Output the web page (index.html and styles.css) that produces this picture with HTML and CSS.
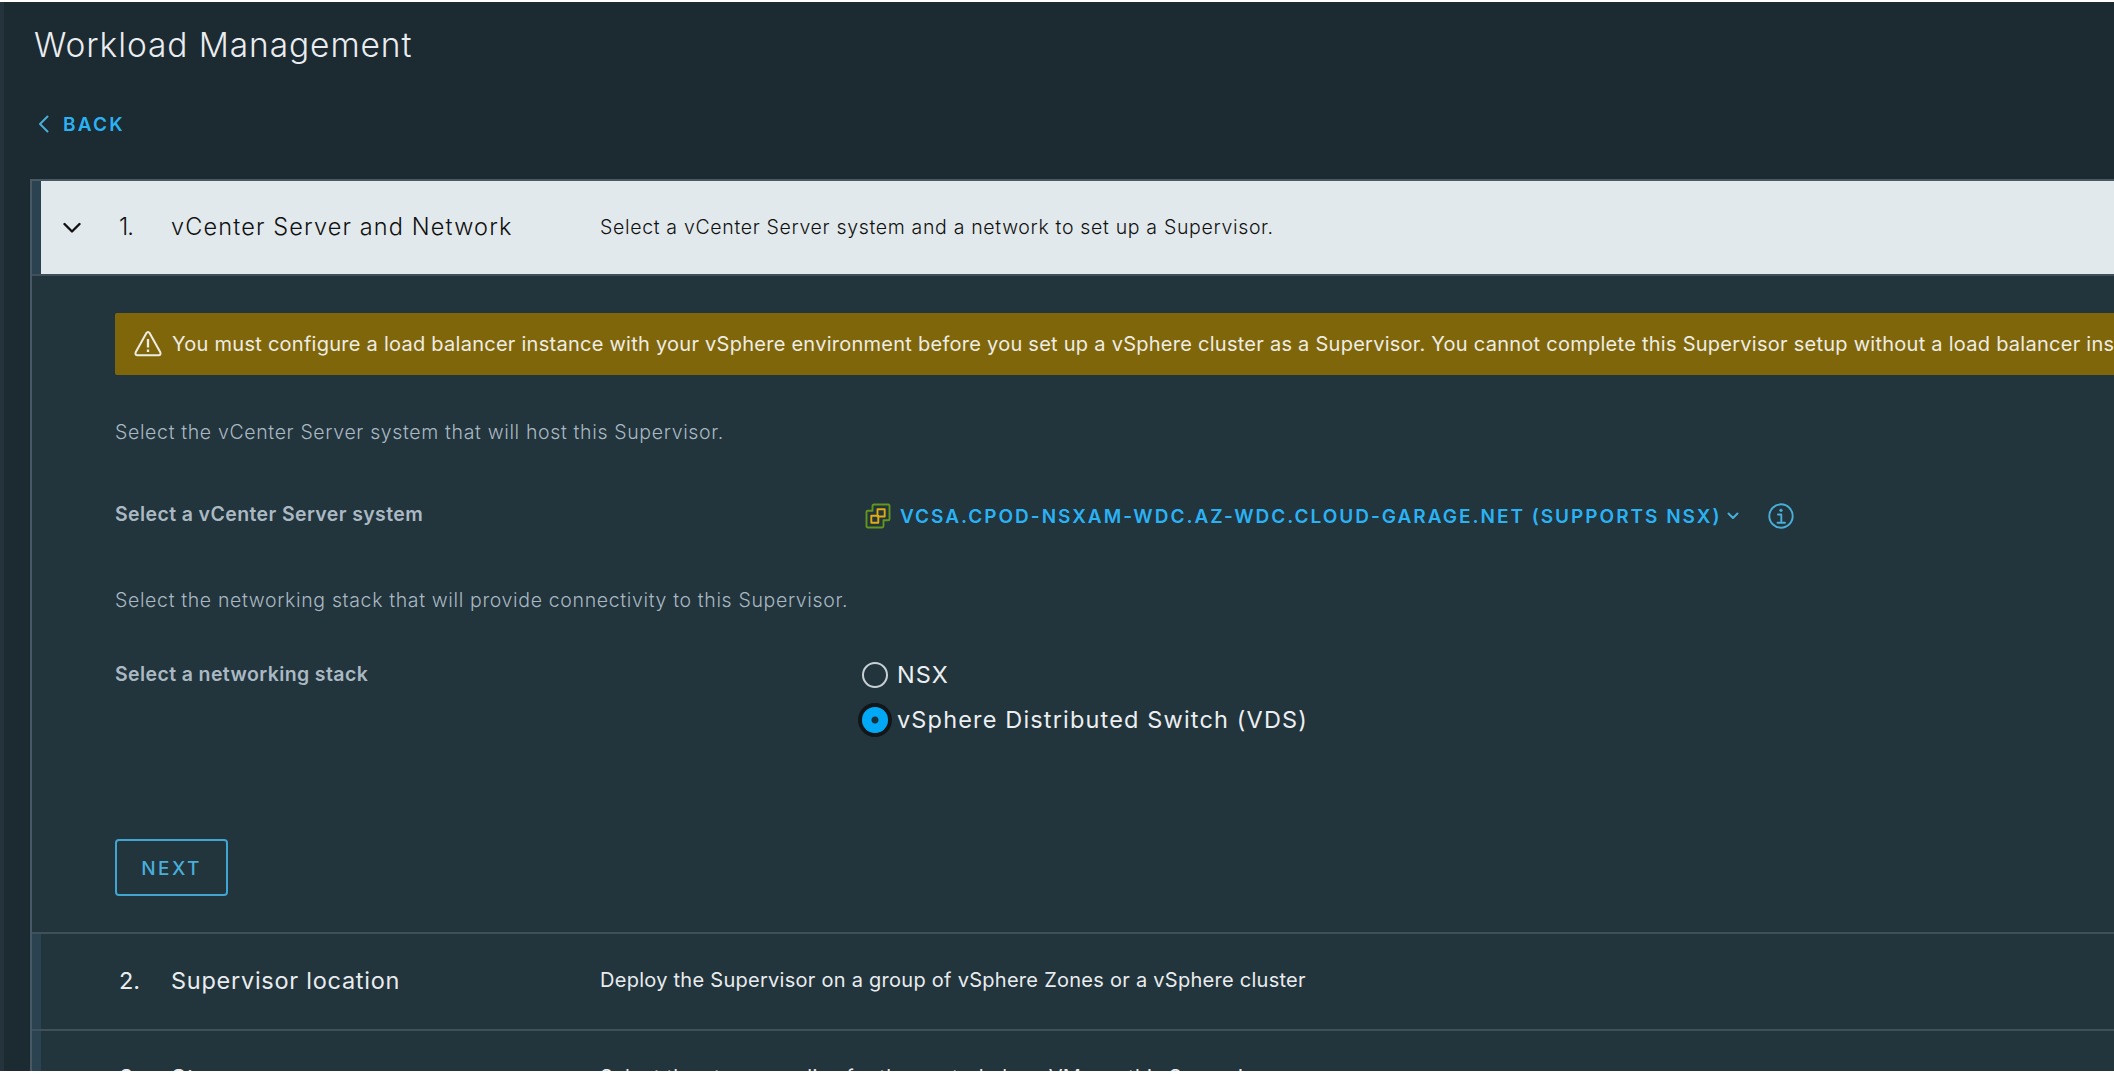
FILE: index.html
```html
<!DOCTYPE html>
<html lang="en">
<head>
<meta charset="utf-8">
<title>Workload Management</title>
<link rel="stylesheet" href="styles.css">
</head>
<body>
<main class="page">
  <h1 class="title">Workload Management</h1>
  <a class="back">
    <svg width="12" height="18" viewBox="0 0 12 18"><path d="M9.5 1.5 2 9l7.5 7.5"/></svg>
    <span>BACK</span>
  </a>
  <section class="accordion">
    <header class="step step-open">
      <svg class="caret" width="18" height="12" viewBox="0 0 18 12"><path d="m1.5 2 7.5 7.5L16.500 2"/></svg>
      <span class="num">1.</span>
      <span class="name">vCenter Server and Network</span>
      <span class="desc">Select a vCenter Server system and a network to set up a Supervisor.</span>
    </header>
    <div class="content">
      <div class="alert">
        <svg width="28" height="28" viewBox="0 0 28 28"><path d="M12.300 3.200 1.700 22.300Q.8 25.200 3.500 25.200H24.500Q27.200 25.200 26.300 22.300L15.700 3.200Q14 .8 12.300 3.200Z"/><path class="mark" d="M14 9v8.500M14 19.500v2.600"/></svg>
        <span>You must configure a load balancer instance with your vSphere environment before you set up a vSphere cluster as a Supervisor. You cannot complete this Supervisor setup without a load balancer instance.</span>
      </div>
      <p class="hint hint-host">Select the vCenter Server system that will host this Supervisor.</p>
      <div class="field field-host">
        <span class="label">Select a vCenter Server system</span>
        <a class="server">
          <svg class="vc" width="26" height="26" viewBox="0 0 26 26"><path class="outer" d="M9 1.500H23.200Q24.500 1.500 24.500 2.800V16Q24.500 17.300 23.200 17.300H18.500V23Q18.500 24.500 17 24.500H2.800Q1.500 24.500 1.500 23.200V9Q1.500 7.700 2.800 7.700H7.500V3Q7.500 1.500 9 1.500Z"/><path class="inner" d="M12.500 6.300h7.200v7.200h-7.200zM6.300 12.800h7v7h-7z"/></svg>
          <span class="server-name">VCSA.CPOD-NSXAM-WDC.AZ-WDC.CLOUD-GARAGE.NET (SUPPORTS NSX)</span>
          <svg class="arrow" width="12" height="8" viewBox="0 0 12 8"><path d="m1.500 1.500 4.500 4.500 4.500-4.500"/></svg>
        </a>
        <svg class="info" width="26" height="26" viewBox="0 0 26 26"><circle cx="13" cy="13" r="11.700"/><path d="M10 11.500h3.300v8M9.500 19.800h7.500"/><circle class="dot" cx="13" cy="7.300" r="1.600"/></svg>
      </div>
      <p class="hint hint-net">Select the networking stack that will provide connectivity to this Supervisor.</p>
      <div class="field field-net">
        <span class="label label-net">Select a networking stack</span>
        <div class="options">
          <label class="option"><i class="radio"></i><span>NSX</span></label>
          <label class="option"><i class="radio radio-on"></i><span>vSphere Distributed Switch (VDS)</span></label>
        </div>
      </div>
      <button class="next">NEXT</button>
    </div>
    <header class="step">
      <span class="num">2.</span>
      <span class="name">Supervisor location</span>
      <span class="desc">Deploy the Supervisor on a group of vSphere Zones or a vSphere cluster</span>
    </header>
    <header class="step">
      <span class="num">3.</span>
      <span class="name">Storage</span>
      <span class="desc">Select the storage policy for the control plane VMs on this Supervisor.</span>
    </header>
  </section>
</main>
</body>
</html>
```

FILE: styles.css
```css
* { box-sizing: border-box; }
body {
  margin: 0;
  height: 1074px;
  padding: 2px 0 3px;
  overflow: hidden;
  background: #fff;
  font-family: Inter, "Liberation Sans", sans-serif;
  white-space: nowrap;
}
svg { flex: none; fill: none; stroke: #49afd9; stroke-width: 2; stroke-linecap: round; stroke-linejoin: round; }
.page {
  height: 1069px;
  overflow: hidden;
  padding-left: 26px;
  border-left: 4px solid #25333c;
  background: #1c2a32;
}
.title {
  margin: 0;
  padding: 19px 0 0 4px;
  font-size: 33.5px;
  font-weight: 350;
  line-height: 48px;
  letter-spacing: .9px;
  color: #eaedf0;
}
.back {
  display: flex;
  align-items: center;
  width: max-content;
  height: 30px;
  margin: 40px 0 0 8px;
  color: #2ab2f5;
  font-size: 19px;
  font-weight: 600;
  letter-spacing: 2.2px;
}
.back span { margin-left: 13px; }
.accordion {
  margin-top: 40px;
  border-left: 2px solid #495865;
  background: #22343c;
}
.step {
  display: flex;
  align-items: center;
  height: 97px;
  padding: 0 0 3px 80px;
  border-top: 2px solid #3f505b;
  box-shadow: inset 9px 0 #2b4250;
  color: #e9ecef;
}
.step-open {
  height: 95px;
  padding: 0 0 2px 31px;
  border-top-color: #495865;
  background: #e2e9ec;
  color: #111;
}
.caret { margin: 2px 31px 0 0; stroke: #111; stroke-width: 2.4; }
.num { width: 59px; padding-left: 7px; font-size: 23.5px; }
.step-open .num { letter-spacing: -1px; }
.name { width: 429px; font-size: 23.5px; letter-spacing: .74px; }
.desc { font-size: 20px; letter-spacing: .27px; }
.step-open .num, .step-open .name { font-weight: 300; }
.step-open .name { letter-spacing: 1.14px; }
.step-open .desc { font-size: 19.5px; font-weight: 350; letter-spacing: .67px; }
.content {
  height: 658px;
  padding: 37px 0 0 83px;
  border-top: 2px solid #3f505b;
}
.alert {
  display: flex;
  align-items: center;
  height: 62px;
  padding-left: 19px;
  border-radius: 2px 0 0 2px;
  background: #80660a;
  color: #eeede4;
  font-size: 20px;
  letter-spacing: .26px;
}
.alert svg { margin-right: 10px; stroke: #eeede4; }
.alert .mark { stroke-linecap: butt; stroke-width: 2.3; }
.hint { margin: 0; color: #a9b8c2; font-size: 19.5px; font-weight: 350; line-height: 30px; letter-spacing: .65px; }
.hint-host { padding-top: 42px; }
.hint-net { padding-top: 54px; }
.field { display: flex; }
.field-host { align-items: center; height: 30px; margin-top: 54px; }
.label { width: 750px; color: #aab9c3; font-size: 19.5px; font-weight: 600; line-height: 30px; letter-spacing: .39px; }
.field-host .label { padding-bottom: 4px; }
.server { display: flex; align-items: center; color: #2ab2f5; font-size: 19px; font-weight: 600; }
.server-name { margin: 0 7px 0 9px; width: 820px; letter-spacing: 1.99px; }
.info { margin-left: 29px; stroke-width: 1.9; }
.info .dot { fill: #49afd9; stroke: none; }
.vc .outer { stroke: #63961d; stroke-width: 1.9; }
.vc .inner { stroke: #e0ac12; stroke-width: 1.9; }
.field-net { margin-top: 44px; }
.label-net { width: 747px; }
.options { display: grid; grid-template-rows: 45px 45px; margin-top: -7px; }
.option { display: flex; align-items: center; color: #eceff1; font-size: 23.5px; letter-spacing: 1.16px; }
.option span { margin-left: 9px; }
.radio { width: 26px; height: 26px; border: 2px solid #c8d0d4; border-radius: 50%; }
.radio-on { border: 0; background: radial-gradient(circle, #17303c 3px, #00a8f5 4px); box-shadow: 0 0 0 4px #111619; }
.next {
  display: block;
  width: 113px;
  height: 57px;
  margin-top: 97px;
  padding: 1px 0 0;
  border: 2px solid #40a5d0;
  border-radius: 4px;
  background: none;
  color: #49afd9;
  font: 500 19px Inter, sans-serif;
  letter-spacing: 2.4px;
}
```
